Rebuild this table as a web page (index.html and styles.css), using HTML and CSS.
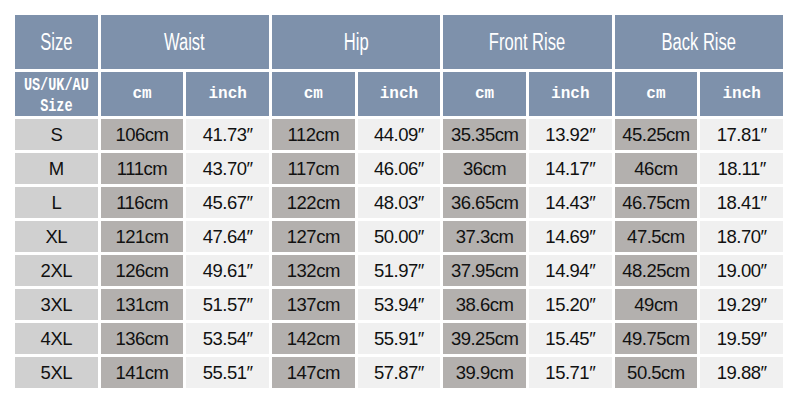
FILE: index.html
```html
<!DOCTYPE html>
<html>
<head>
<meta charset="utf-8">
<link rel="stylesheet" href="styles.css">
</head>
<body>
<table class="chart">
  <colgroup>
    <col class="c"><col class="c"><col class="c"><col class="c"><col class="c"><col class="c"><col class="c"><col class="c"><col class="c">
  </colgroup>
  <thead>
    <tr class="h1">
      <th><span class="t">Size</span></th>
      <th colspan="2"><span class="t">Waist</span></th>
      <th colspan="2"><span class="t">Hip</span></th>
      <th colspan="2"><span class="t">Front Rise</span></th>
      <th colspan="2"><span class="t">Back Rise</span></th>
    </tr>
    <tr class="h2">
      <th class="region"><span class="r">US/UK/AU</span><br><span class="r">Size</span></th>
      <th>cm</th><th>inch</th>
      <th>cm</th><th>inch</th>
      <th>cm</th><th>inch</th>
      <th>cm</th><th>inch</th>
    </tr>
  </thead>
  <tbody>
    <tr><td class="sz">S</td><td class="cm">106cm</td><td class="in">41.73″</td><td class="cm">112cm</td><td class="in">44.09″</td><td class="cm">35.35cm</td><td class="in">13.92″</td><td class="cm">45.25cm</td><td class="in">17.81″</td></tr>
    <tr><td class="sz">M</td><td class="cm">111cm</td><td class="in">43.70″</td><td class="cm">117cm</td><td class="in">46.06″</td><td class="cm">36cm</td><td class="in">14.17″</td><td class="cm">46cm</td><td class="in">18.11″</td></tr>
    <tr><td class="sz">L</td><td class="cm">116cm</td><td class="in">45.67″</td><td class="cm">122cm</td><td class="in">48.03″</td><td class="cm">36.65cm</td><td class="in">14.43″</td><td class="cm">46.75cm</td><td class="in">18.41″</td></tr>
    <tr><td class="sz">XL</td><td class="cm">121cm</td><td class="in">47.64″</td><td class="cm">127cm</td><td class="in">50.00″</td><td class="cm">37.3cm</td><td class="in">14.69″</td><td class="cm">47.5cm</td><td class="in">18.70″</td></tr>
    <tr><td class="sz">2XL</td><td class="cm">126cm</td><td class="in">49.61″</td><td class="cm">132cm</td><td class="in">51.97″</td><td class="cm">37.95cm</td><td class="in">14.94″</td><td class="cm">48.25cm</td><td class="in">19.00″</td></tr>
    <tr><td class="sz">3XL</td><td class="cm">131cm</td><td class="in">51.57″</td><td class="cm">137cm</td><td class="in">53.94″</td><td class="cm">38.6cm</td><td class="in">15.20″</td><td class="cm">49cm</td><td class="in">19.29″</td></tr>
    <tr><td class="sz">4XL</td><td class="cm">136cm</td><td class="in">53.54″</td><td class="cm">142cm</td><td class="in">55.91″</td><td class="cm">39.25cm</td><td class="in">15.45″</td><td class="cm">49.75cm</td><td class="in">19.59″</td></tr>
    <tr><td class="sz">5XL</td><td class="cm">141cm</td><td class="in">55.51″</td><td class="cm">147cm</td><td class="in">57.87″</td><td class="cm">39.9cm</td><td class="in">15.71″</td><td class="cm">50.5cm</td><td class="in">19.88″</td></tr>
  </tbody>
</table>
</body>
</html>
```
FILE: styles.css
```css
html, body {
  margin: 0;
  padding: 0;
  background: #ffffff;
}
.chart {
  margin: 12px;
  width: 774px;
  table-layout: fixed;
  border-collapse: separate;
  border-spacing: 3px;
  background: #ffffff;
}
.chart .c {
  width: 82.67px;
}
.chart th,
.chart td {
  padding: 0;
  text-align: center;
  vertical-align: middle;
}
.h1 th {
  height: 54px;
  background: #7e91ab;
  color: #ffffff;
  font-family: "Liberation Sans", Arial, sans-serif;
  font-weight: normal;
  font-size: 23px;
}
.h1 .t {
  display: inline-block;
  transform: scaleX(0.72);
  white-space: nowrap;
}
.h2 th {
  height: 44px;
  background: #7e91ab;
  color: #ffffff;
  font-family: "Liberation Mono", "Courier New", monospace;
  font-weight: bold;
  font-size: 16px;
}
.h2 th.region {
  font-size: 13.5px;
  line-height: 21px;
}
.h2 .r {
  display: inline-block;
  transform: translateY(2px) scaleY(1.3);
}
td {
  height: 31px;
  font-family: "Liberation Sans", Arial, sans-serif;
  font-size: 18.5px;
  letter-spacing: -0.5px;
  color: #111111;
}
td.sz {
  background: #d0d0d0;
}
td.cm {
  background: #b3b0ae;
}
td.in {
  background: #f0f0f0;
}
```
